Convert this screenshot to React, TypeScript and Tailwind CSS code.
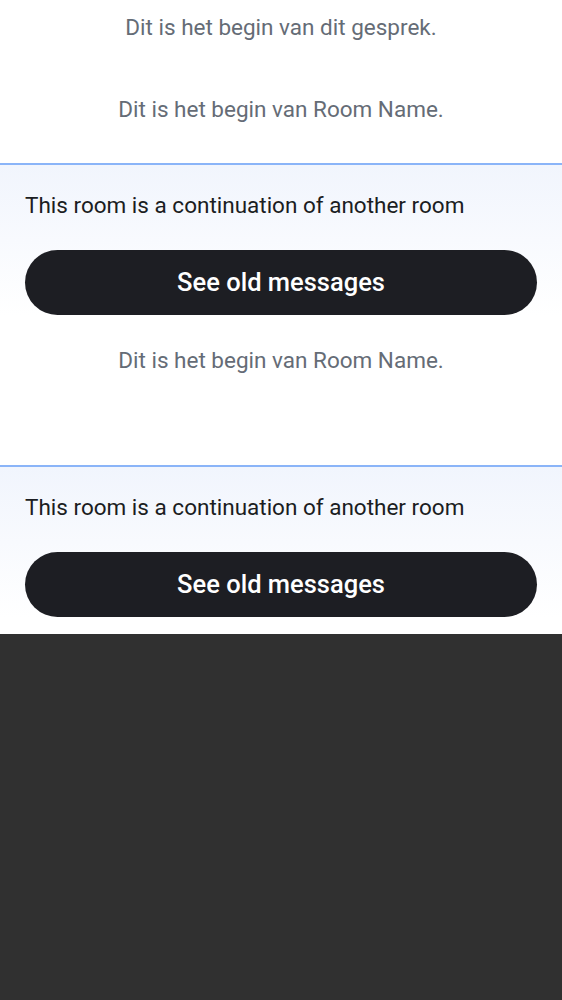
import React from "react";

function Notice({ text, className }: { text: string; className?: string }) {
  return (
    <div className={"flex justify-center text-[22.5px] leading-[24px] text-[#656c76] " + (className ?? "")}>
      {text}
    </div>
  );
}

function Banner() {
  return (
    <div className="border-t-2 border-[#8ab4f8] bg-gradient-to-b from-[#f1f5fd] to-white px-[25px] pt-[27px]">
      <div className="text-[22.5px] leading-[26px] text-[#1b1d22]">This room is a continuation of another room</div>
      <button className="mt-[32px] flex h-[65px] w-full items-center justify-center rounded-full bg-[#1d1e23] text-[25.5px] font-medium text-white">
        See old messages
      </button>
    </div>
  );
}

export default function App() {
  return (
    <div className="min-h-screen bg-[#303030]" style={{ fontFamily: "Roboto, 'Noto Sans', sans-serif" }}>
      <div className="bg-white">
        <Notice text="Dit is het begin van dit gesprek." className="pt-[15px]" />
        <Notice text="Dit is het begin van Room Name." className="mt-[58px] mb-[42px]" />
        <Banner />
        <Notice text="Dit is het begin van Room Name." className="mt-[33px] mb-[93px]" />
        <Banner />
        <div className="h-[17px]" />
      </div>
    </div>
  );
}
